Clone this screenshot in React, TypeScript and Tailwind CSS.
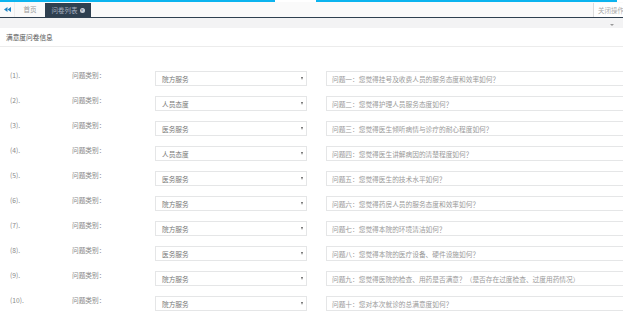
import React from "react";

const rows: [string, string, string][] = [
  ["(1).", "院方服务", "问题一：您觉得挂号及收费人员的服务态度和效率如何？"],
  ["(2).", "人员态度", "问题二：您觉得护理人员服务态度如何？"],
  ["(3).", "医务服务", "问题三：您觉得医生倾听病情与诊疗的耐心程度如何？"],
  ["(4).", "人员态度", "问题四：您觉得医生讲解病因的清楚程度如何？"],
  ["(5).", "医务服务", "问题五：您觉得医生的技术水平如何？"],
  ["(6).", "院方服务", "问题六：您觉得药房人员的服务态度和效率如何？"],
  ["(7).", "院方服务", "问题七：您觉得本院的环境清洁如何？"],
  ["(8).", "医务服务", "问题八：您觉得本院的医疗设备、硬件设施如何？"],
  ["(9).", "院方服务", "问题九：您觉得医院的检查、用药是否满意？（是否存在过度检查、过度用药情况）"],
  ["(10).", "院方服务", "问题十：您对本次就诊的总满意度如何？"],
];

const font = { fontFamily: '"Noto Sans CJK SC", "Noto Sans", sans-serif' };

export default function App() {
  return (
    <div className="w-[623px] h-[314px] overflow-hidden bg-white relative" style={font}>
      {/* top cyan strip */}
      <div className="flex h-[2px]">
        <div className="w-[275px] bg-[#0cb4ef]" />
        <div className="w-[41px] bg-white" />
        <div className="w-[301px] bg-[#0cb4ef]" />
        <div className="flex-1 bg-white" />
      </div>
      {/* tab bar */}
      <div className="flex h-[16px] bg-[#fafafa] border-b border-[#2f4050]">
        <div className="w-[15px] shrink-0 flex items-center justify-center border-r border-[#eee]">
          <svg width="7" height="5" viewBox="0 0 7 5">
            <path d="M3.5 0 L0 2.5 L3.5 5 Z" fill="#1c84c6" />
            <path d="M7 0 L3.5 2.5 L7 5 Z" fill="#1c84c6" />
          </svg>
        </div>
        <div className="w-[30px] shrink-0 flex items-center justify-center text-[6.5px] leading-none text-[#999]">首页</div>
        <div className="mt-[1px] w-[46px] shrink-0 bg-[#2f4050] flex items-center justify-center gap-[2px] text-[6.5px] leading-none text-[#a7b1c2]">
          <span>问卷列表</span>
          <span className="w-[5px] h-[5px] rounded-full bg-[#ccd2da] flex items-center justify-center text-[4px] text-[#2f4050] leading-none">×</span>
        </div>
        <div className="flex-1" />
        <div className="mt-[1px] w-[30px] shrink-0 bg-white border-l border-[#ddd] flex items-center pl-[4px] text-[6.5px] leading-none text-[#aaa] whitespace-nowrap overflow-hidden">
          关闭操作
        </div>
      </div>
      {/* gray gap */}
      <div className="h-[10px] bg-[#f3f3f4] relative">
        <span className="absolute right-[9px] top-[6px] w-0 h-0 border-l-[2px] border-r-[2px] border-t-[2px] border-l-transparent border-r-transparent border-t-[#999]" />
      </div>
      {/* panel header */}
      <div className="h-[19px] border-b border-[#ececec] flex items-center pl-[6px] text-[6.7px] text-[#555]">
        满意度问卷信息
      </div>
      {/* rows */}
      <div className="pt-[24px] flex flex-col">
        {rows.map(([n, cat, q], i) => (
          <div key={i} className="flex items-start h-[25px] text-[6.7px] leading-[8px] text-[#888]">
            <div className="w-[72px] shrink-0 pl-[10px]">{n}</div>
            <div className="w-[83px] shrink-0">问题类别：</div>
            <div className="w-[152px] shrink-0 h-[15px] border border-[#e5e6e7] flex items-center justify-between pl-[6px] pr-[3px] text-[#777]">
              <span>{cat}</span>
              <span className="w-0 h-0 border-l-[1.5px] border-r-[1.5px] border-t-[3px] border-l-transparent border-r-transparent border-t-[#666]" />
            </div>
            <div className="ml-[19px] w-[320px] shrink-0 h-[15px] border border-[#e5e6e7] flex items-center pl-[5px] text-[#999] whitespace-nowrap">
              {q}
            </div>
          </div>
        ))}
      </div>
    </div>
  );
}
